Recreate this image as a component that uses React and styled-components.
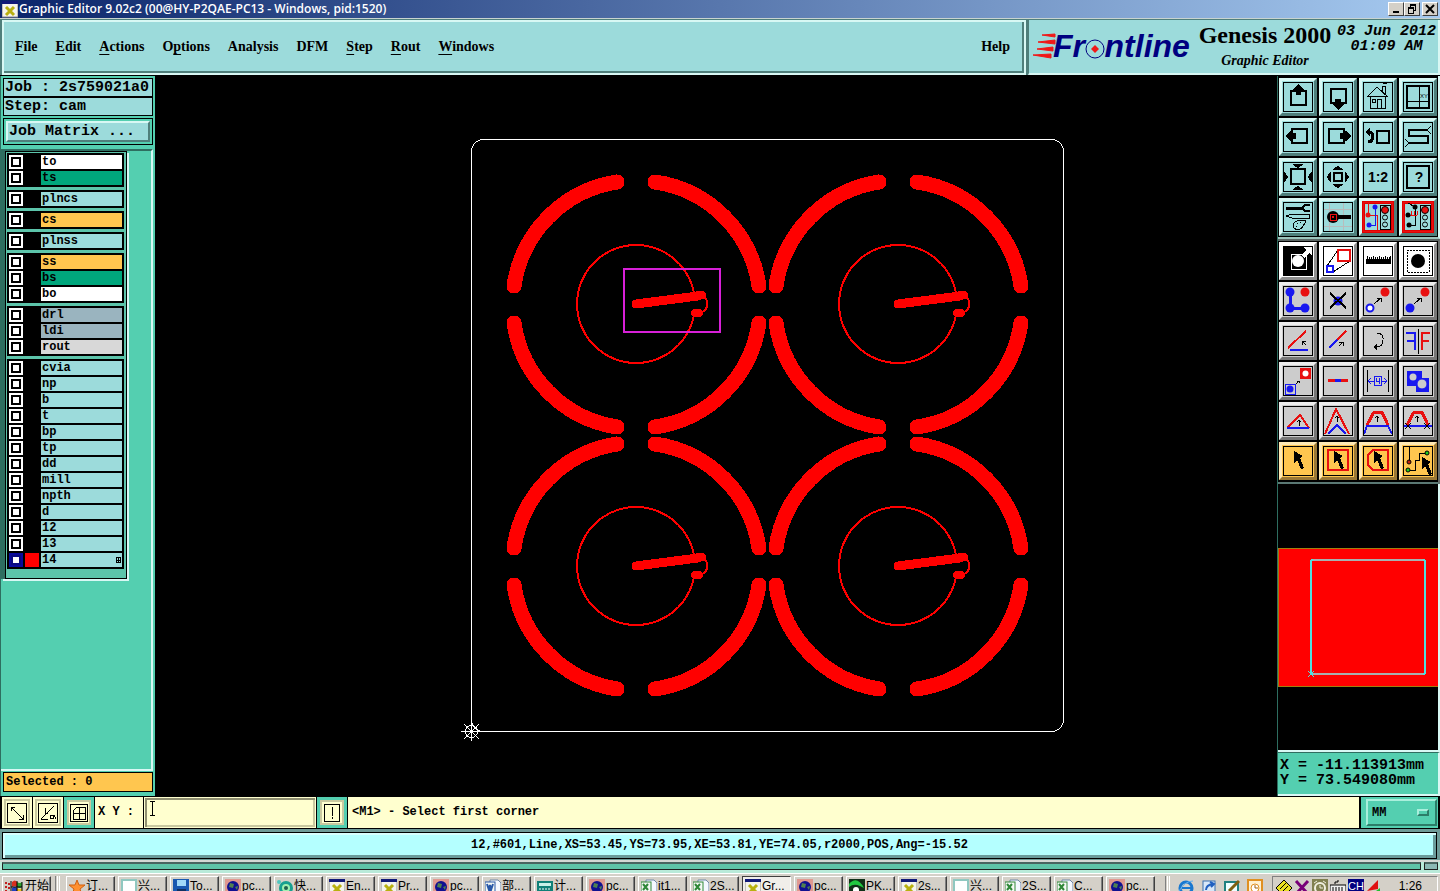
import React from "react";
import styled, { createGlobalStyle, css } from "styled-components";

const GlobalStyle = createGlobalStyle`
  * {
    box-sizing: border-box;
  }
  body {
    margin: 0;
    background: #000000;
    overflow: hidden;
  }
  button, input, select {
    font: inherit;
    color: inherit;
    margin: 0;
    padding: 0;
    border: 0;
    border-radius: 0;
    background: none;
  }
  svg {
    display: block;
    flex: none;
  }
`;

const mono = `"Liberation Mono", "Courier New", monospace`;
const serif = `"Liberation Serif", "Times New Roman", serif`;
const ui = `"Liberation Sans", "Noto Sans CJK SC", sans-serif`;

const aqua = "#9cdbdb";
const teal = "#54cfb0";
const dark = "#4f7f7b";
const light = "#d8f8f4";
const cream = "#ffffcf";

const Page = styled.div`
  display: flex;
  flex-direction: column;
  height: 100vh;
  overflow: hidden;
`;

/* title bar */

const TitleBar = styled.div`
  flex: none;
  display: flex;
  align-items: center;
  gap: 1px;
  height: 18px;
  padding: 0 2px;
  background: linear-gradient(90deg, #0a246a, #a6caf0);
  color: #ffffff;
  font: 600 12px "Open Sans", "Noto Sans", sans-serif;
`;

const TitleText = styled.span`
  flex: 1;
  line-height: 16px;
  white-space: nowrap;
`;

const WindowButtons = styled.div`
  display: flex;
  button + button + button {
    margin-left: 2px;
  }
`;

const WindowButton = styled.button`
  width: 16px;
  height: 14px;
  display: flex;
  align-items: center;
  justify-content: center;
  background: #d4d0c8;
  border: 1px solid;
  border-color: #ffffff #404040 #404040 #ffffff;
`;

/* header */

const Header = styled.header`
  flex: none;
  display: flex;
  gap: 2px;
  height: 58px;
  padding-left: 2px;
  background: ${dark};
  border-top: 1px solid #c8d4d0;
  border-bottom: 1px solid #000000;
`;

const MenuBar = styled.nav`
  flex: 1;
  display: flex;
  align-items: center;
  gap: 18px;
  margin-top: 1px;
  padding: 0 14px 2px 11px;
  background: ${aqua};
  border: 2px solid ${light};
  box-shadow: inset -2px -2px ${dark};
  font: bold 14px ${serif};
  color: #000000;
`;

const MenuItem = styled.button`
  line-height: 18px;
  margin-left: ${props => (props.$end ? "auto" : 0)};
  u {
    text-underline-offset: 3px;
  }
`;

const Brand = styled.div`
  flex: 0 0 412px;
  display: flex;
  justify-content: space-between;
  margin-top: 1px;
  padding: 0 2px 0 4px;
  background: ${aqua};
  border-left: 1px solid ${dark};
  border-right: 2px solid ${light};
  border-bottom: 2px solid ${light};
`;

const Product = styled.div`
  text-align: center;
  font: bold 24px/30px ${serif};
  em {
    display: block;
    font-size: 14px;
    line-height: 22px;
  }
`;

const Clock = styled.div`
  padding-top: 4px;
  text-align: center;
  font: italic bold 15px/15px ${mono};
  white-space: pre-line;
`;

/* main area */

const Main = styled.main`
  flex: 1;
  display: flex;
  min-height: 0;
  background: #000000;
`;

const Sidebar = styled.aside`
  flex: 0 0 155px;
  display: flex;
  flex-direction: column;
  padding: 1px 2px 4px 2px;
  background: ${teal};
  border-left: 1px solid #2e6e60;
  font: bold 15px ${mono};
`;

const JobLine = styled.div`
  height: 19px;
  margin-top: ${props => (props.$first ? "1px" : 0)};
  padding-left: 1px;
  background: ${aqua};
  border: 1px solid #000000;
  line-height: 17px;
  white-space: nowrap;
`;

const MatrixFrame = styled.div`
  margin: 2px 0 3px;
  padding: 2px;
  border: 1px solid #000000;
`;

const MatrixButton = styled.button`
  display: block;
  width: 100%;
  height: 21px;
  padding-left: 1px;
  background: ${aqua};
  border: 2px solid;
  border-color: ${light} ${dark} ${dark} ${light};
  text-align: left;
  line-height: 17px;
`;

const LayerArea = styled.div`
  flex: 1;
  margin: 1px 0 1px -2px;
  border-top: 2px solid #2e6e60;
  border-right: 2px solid ${light};
  border-bottom: 2px solid ${light};
`;

const LayerPanel = styled.div`
  display: flex;
  flex-direction: column;
  gap: 3px;
  width: 122px;
  padding: 1px 2px 9px 1px;
  background: #5cc4aa;
  border: 1px solid #000000;
`;

const LayerWrap = styled.div`
  display: inline-block;
  padding-left: 4px;
  background: #2e6e60;
  box-shadow: 2px 2px ${light};
`;

const LayerGroup = styled.div`
  display: flex;
  flex-direction: column;
  gap: 2px;
  padding: 2px;
  background: #000000;
`;

const LayerRow = styled.label`
  display: grid;
  grid-template-columns: 14px 14px 1fr;
  column-gap: 2px;
  height: 14px;
`;

const LayerCheck = styled.input`
  appearance: none;
  width: 14px;
  height: 14px;
  background: #ffffff;
  border: 2px solid ${props => (props.$active ? "#0a0a9c" : "#ffffff")};
  box-shadow: inset 0 0 0 2px ${props => (props.$active ? "#0a0a80" : "#000000")};
`;

const Swatch = styled.span`
  background: ${props => (props.$on ? "#ff0000" : "#000000")};
`;

const LayerName = styled.span`
  display: flex;
  justify-content: space-between;
  align-items: center;
  padding: 0 1px;
  background: ${props => props.$color};
  font-size: 12px;
  line-height: 14px;
`;

const Selected = styled.div`
  height: 20px;
  padding-left: 2px;
  background: #ffc64f;
  border: 1px solid #000000;
  font-size: 12px;
  line-height: 18px;
`;

const Canvas = styled.div`
  flex: 1;
  min-width: 0;
  svg {
    width: 100%;
    height: 100%;
  }
`;

/* right column */

const Tools = styled.aside`
  flex: 0 0 163px;
  display: flex;
  flex-direction: column;
  border-left: 1px solid #2e6e60;
`;

const ToolGroup = styled.div`
  display: grid;
  grid-template-columns: repeat(4, 38px);
  gap: 2px;
  padding: ${props => (props.$grey ? "1px 1px 2px" : "2px 1px 1px")};
  background: #000000;
  border-right: 2px solid ${props => (props.$grey ? "#6a6f6d" : light)};
  border-top: ${props => (props.$grey ? "2px solid #5a6462" : 0)};
  border-bottom: 2px solid ${props => (props.$grey ? "#5a7874" : "#9cc4bc")};
`;

const toolTones = {
  aqua: css`
    background: ${aqua};
    border-color: ${light} ${dark} ${dark} ${light};
  `,
  white: css`
    background: #ffffff;
    border-color: #ffffff #8f8f8f #8f8f8f #ffffff;
  `,
  grey: css`
    background: #cccccc;
    border-color: #ededed #777777 #777777 #ededed;
  `,
  orange: css`
    background: #ffc64f;
    border-color: #ffe9b4 #9a7836 #9a7836 #ffe9b4;
  `
};

const ToolButton = styled.button`
  width: 38px;
  height: 38px;
  display: flex;
  align-items: center;
  justify-content: center;
  border: 3px solid;
  ${props => toolTones[props.$tone]}
  box-shadow: ${props => (props.$alert ? "inset 0 0 0 3px #e00000" : "none")};
  circle, text {
    shape-rendering: geometricPrecision;
  }
`;

const Preview = styled.div`
  flex: 1;
  display: flex;
  align-items: center;
  background: #000000;
  border-right: 2px solid ${light};
  border-bottom: 2px solid ${light};
  svg {
    width: 100%;
  }
`;

const Coordinates = styled.div`
  height: 44px;
  padding: 5px 2px;
  background: ${teal};
  border-top: 1px solid #2e6e60;
  border-right: 2px solid ${light};
  border-bottom: 2px solid ${light};
  font: bold 15px/15px ${mono};
  white-space: pre;
`;

/* bottom rows */

const PromptRow = styled.div`
  flex: none;
  display: flex;
  gap: 1px;
  height: 33px;
  padding: 1px 2px;
  background: #000000;
  font: bold 12px ${mono};
`;

const PromptButton = styled.button`
  flex: 0 0 30px;
  display: flex;
  align-items: center;
  justify-content: center;
  background: ${cream};
  border: ${props => (props.$raised ? `3px solid ${teal}` : "2px solid #ffffcf")};
  box-shadow: inset 0 0 0 2px #c9c9a0;
`;

const XYLabel = styled.label`
  flex: 0 0 48px;
  padding-left: 3px;
  background: ${cream};
  line-height: 31px;
  white-space: nowrap;
`;

const XYField = styled.div`
  flex: 0 0 172px;
  position: relative;
  display: flex;
`;

const XYInput = styled.input`
  flex: 1;
  min-width: 0;
  padding: 0 4px;
  background: ${cream};
  border: 1px solid ${cream};
  box-shadow: inset 2px 2px #8f8f70, inset -2px -2px #c9c9a0;
`;

const Pointer = styled.svg`
  position: absolute;
  left: 6px;
  top: 4px;
`;

const Message = styled.div`
  flex: 1;
  margin-right: 1px;
  padding-left: 4px;
  background: ${cream};
  line-height: 31px;
`;

const UnitBox = styled.div`
  flex: 0 0 77px;
  padding: 2px 1px 2px 5px;
  background: ${teal};
`;

const UnitField = styled.div`
  display: flex;
  align-items: center;
  height: 27px;
  padding: 0 6px 0 4px;
  border: 2px solid;
  border-color: #a9efdc #2c7d69 #2c7d69 #a9efdc;
`;

const UnitSelect = styled.select`
  flex: 1;
  min-width: 0;
  appearance: none;
`;

const UnitMark = styled.span`
  width: 12px;
  height: 7px;
  border: 2px solid;
  border-color: #a9efdc #2c7d69 #2c7d69 #a9efdc;
`;

const StatusRow = styled.div`
  flex: none;
  padding: 3px 3px 1px 2px;
  background: #6f9b98;
`;

const Status = styled.output`
  display: block;
  height: 27px;
  background: #b4ffff;
  border: 1px solid #000000;
  box-shadow: inset 2px 2px #d8ffff, inset -3px -3px #6a9c9c;
  font: bold 12px/25px ${mono};
  text-align: center;
`;

const Strip = styled.div`
  flex: none;
  display: flex;
  gap: 3px;
  height: 13px;
  padding: 0 2px 3px;
  background: #b9ead9;
  border-top: 2px solid #d4d8d4;
`;

const StripBar = styled.div`
  flex: ${props => (props.$small ? "0 0 14px" : 1)};
  background: ${props => (props.$small ? "#8cb8b4" : "#5fc4a8")};
  border: 1px solid #202020;
  border-top: 2px solid #4a6460;
`;

/* taskbar */

const Taskbar = styled.footer`
  flex: none;
  display: flex;
  height: 18px;
  overflow: hidden;
  padding: 2px 2px 0;
  background: #d4d0c8;
  border-top: 1px solid #ffffff;
  font: 12px ${ui};
`;

const TaskButton = styled.button`
  flex: 0 1 49px;
  min-width: 0;
  height: 22px;
  display: flex;
  align-items: flex-start;
  gap: 1px;
  padding: 2px 0 0 2px;
  overflow: hidden;
  white-space: nowrap;
  line-height: 14px;
  background: ${props => (props.$active ? "#f0eeea" : "#d4d0c8")};
  border: 1px solid;
  border-color: ${props =>
    props.$active ? "#404040 #ffffff #ffffff #404040" : "#ffffff #404040 #404040 #ffffff"};
  box-shadow: ${props => (props.$active ? "none" : "inset -1px -1px #808080")};
`;

const TaskList = styled.div`
  flex: 1;
  display: flex;
  gap: 3px;
  min-width: 0;
`;

const Grip = styled.span`
  flex: none;
  width: 5px;
  height: 22px;
  margin: 0 ${props => props.$right}px 0 ${props => props.$left}px;
  border-left: 1px solid #808080;
  border-right: 3px double #ffffff;
`;

const QuickLaunch = styled.div`
  display: flex;
  gap: 7px;
  height: 22px;
  padding-top: 3px;
`;

const Tray = styled.div`
  flex: 0 0 166px;
  display: flex;
  gap: 2px;
  height: 22px;
  margin-left: 9px;
  padding: 2px 15px 0 3px;
  border: 1px solid;
  border-color: #808080 #ffffff #ffffff #808080;
  line-height: 14px;
  time {
    margin-left: auto;
  }
`;

const layerGroups = [
  [["to", "#ffffff"], ["ts", "#00a67c"]],
  [["plncs", aqua]],
  [["cs", "#ffc64f"]],
  [["plnss", aqua]],
  [["ss", "#ffc64f"], ["bs", "#00a67c"], ["bo", "#ffffff"]],
  [["drl", "#9ab4bf"], ["ldi", "#9ab4bf"], ["rout", "#d8d8d8"]],
  ["cvia", "np", "b", "t", "bp", "tp", "dd", "mill", "npth", "d", "12", "13", "14"].map(name => [name, aqua])
];

const menus = [
  ["", "F", "ile"],
  ["", "E", "dit"],
  ["", "A", "ctions"],
  ["O", "p", "tions"],
  ["Analysis", "", ""],
  ["DFM", "", ""],
  ["", "S", "tep"],
  ["", "R", "out"],
  ["", "W", "indows"]
];

const K = "#000000";
const R = "#e81010";
const B = "#1818f0";

const TrafficLight = () => (
  <>
    <rect x="17" y="3" width="10" height="24" fill={aqua} stroke={K} />
    <circle cx="22" cy="8" r="3.5" fill={R} stroke={K} />
    <circle cx="22" cy="15.5" r="2.5" fill="none" stroke={K} />
    <circle cx="22" cy="22.5" r="2.5" fill="none" stroke={K} />
  </>
);

const Cursor = ({ x = 0, y = 0 }) => (
  <path d={`M${11 + x} ${5 + y}l9 5-3 2 4 10-3 1-4-9-3 3z`} fill={K} />
);

const UpArrow = ({ x, y }) => (
  <path d={`M${x} ${y + 6}V${y}M${x - 2} ${y + 2}l2-2 2 2`} fill="none" stroke={K} />
);

const viewTools = [
  ["Pan up", <><rect x="8" y="9" width="15" height="14" fill="none" stroke={K} strokeWidth="2" /><path d="M15 2l6 6v2h-3v3h-5v-3H9V8z" /></>],
  ["Pan down", <><rect x="8" y="7" width="15" height="14" fill="none" stroke={K} strokeWidth="2" /><path d="M15 28l-6-6v-2h3v-3h6v3h3v2z" /></>],
  ["Home", <><path d="M7 14v12h15V14M4 15L14 5l11 10M5 14h19M19 9V4h3v8M14 26v-9h4v9M9 17h3v3H9zM20 2l4-1" fill="none" stroke={K} /></>],
  ["XY zoom", <><rect x="4" y="4" width="22" height="22" fill="none" stroke={K} strokeWidth="2" /><path d="M16 4v22M4 19h22" stroke={K} /><text x="17" y="16" fontSize="6" fontFamily="Liberation Sans, sans-serif">XY</text></>],
  ["Pan left", <><rect x="9" y="7" width="15" height="14" fill="none" stroke={K} strokeWidth="2" /><path d="M2 14l5-5h2v2h4v6H9v2H7z" /></>],
  ["Pan right", <><rect x="6" y="7" width="15" height="14" fill="none" stroke={K} strokeWidth="2" /><path d="M28 14l-5-5h-2v2h-4v6h4v2h2z" /></>],
  ["Previous zoom", <><rect x="14" y="9" width="12" height="12" fill="none" stroke={K} strokeWidth="2" /><path d="M5 10h2c4 1 4 10-2 10" fill="none" stroke={K} strokeWidth="3" /><path d="M7 5v10L2 10z" /></>],
  ["Serpentine", <><path d="M24 8H6v6h19v7H5" fill="none" stroke={K} strokeWidth="2" /><path d="M28 4l-4 4 4 4M2 17l4 4-4 4" fill="none" stroke={K} /></>],
  ["Zoom in", <><rect x="8" y="7" width="14" height="15" fill="none" stroke={K} strokeWidth="2" /><path d="M10 2h10v1l-5 3-5-3zM10 28h10v-1l-5-3-5 3zM1 10v10h1l3-5-3-5zM29 10v10h-1l-3-5 3-5z" /></>],
  ["Zoom out", <><rect x="11" y="11" width="8" height="8" fill="none" stroke={K} strokeWidth="2" /><path d="M10 8h10v-1l-5-3-5 3zM10 22h10v1l-5 3-5-3zM8 10v10h-1l-3-5 3-5zM22 10v10h1l3-5-3-5z" /></>],
  ["Scale", <text x="15" y="20" textAnchor="middle" fontSize="14" fontWeight="bold" fontFamily="Liberation Sans, sans-serif">1:2</text>],
  ["Query", <><rect x="4" y="4" width="22" height="22" fill="none" stroke={K} strokeWidth="2" /><text x="16" y="20" textAnchor="middle" fontSize="14" fontWeight="bold" fontFamily="Liberation Sans, sans-serif">?</text></>],
  ["Settings", <><path d="M3 6h16" stroke={K} strokeWidth="3" /><path d="M27 3h-5l-3 3 3 3h5" fill="none" stroke={K} strokeWidth="2" /><path d="M3 14l6-2h17v4H9zM11 26c-4-7 6-9 12-7 0 3-2 2-3 5s-6 5-9 2z" fill="none" stroke={K} /><path d="M14 21h1M17 20h1M13 24h1" stroke={K} /></>],
  ["Snap", <><path d="M6 1v28M20 1v28M1 7h28M1 24h28" stroke="#b8bcbc" /><circle cx="10" cy="15" r="6" /><path d="M15 15h13" stroke={K} strokeWidth="4" /><rect x="7" y="12" width="6" height="6" fill="none" stroke={R} /><rect x="9" y="14" width="2" height="2" fill={R} /></>],
  ["Net display", <><path d="M5 1v12h9v15" fill="none" stroke={R} /><path d="M12 4v19H6" fill="none" stroke={B} /><circle cx="5" cy="13" r="2.5" fill={R} /><circle cx="12" cy="5" r="2.5" fill={B} /><circle cx="6" cy="23" r="2.5" fill={B} /><TrafficLight /></>, true],
  ["Net check", <><path d="M5 1l7 4v18H6" fill="none" stroke={K} /><path d="M5 13h9M8 9v4M11 9v4M14 9v4" fill="none" stroke={R} /><circle cx="5" cy="13" r="2.5" /><circle cx="12" cy="5" r="2.5" /><circle cx="6" cy="23" r="2.5" /><TrafficLight /></>, true]
];

const trapezoid = "M4 19l7-13h8l6 13";

const editTools = [
  ["white", "Negative", <><rect width="30" height="30" /><path d="M8 8h15v15H8z" fill="none" stroke="#fff" /><circle cx="15" cy="15" r="6" fill="#fff" /><path d="M18 9l5-5-2-3h8v8l-3-2-5 5z" fill="#fff" /></>],
  ["white", "Resize", <><path d="M4 20L15 4M10 26l17-11" stroke={K} /><path d="M15 4h12v11H15z" fill="none" stroke={R} strokeWidth="2" /><path d="M4 20h6v6H4z" fill="none" stroke={B} strokeWidth="2" /></>],
  ["white", "Measure", <><rect x="3" y="13" width="25" height="5" /><path d="M4 10v4M6 11v3M8 11v3M10 10v4M12 11v3M14 11v3M16 10v4M18 11v3M20 11v3M22 10v4M24 11v3M26 11v3M27 10v4" stroke={K} /></>],
  ["white", "Select features", <><path d="M4 4h22v22H4z" fill="none" stroke={K} strokeDasharray="2 1" /><circle cx="15" cy="15" r="7" /></>],
  ["grey", "Reconnect", <><path d="M7 6v16h15" fill="none" stroke={B} strokeWidth="3" /><circle cx="7" cy="6" r="4.5" fill={B} /><circle cx="7" cy="22" r="4.5" fill={B} /><circle cx="22" cy="22" r="4.5" fill={B} /><circle cx="22" cy="6" r="4.5" fill={R} /></>],
  ["grey", "Delete", <><circle cx="15" cy="15" r="4.5" fill={B} /><path d="M7 7l16 15M23 7L7 22" stroke={K} strokeWidth="2" /></>],
  ["grey", "Copy", <><circle cx="22" cy="6" r="4.5" fill={R} /><circle cx="7" cy="22" r="3.5" fill="#fff" stroke={B} strokeWidth="2" /><path d="M11 18l7-6M14 12h4v4" fill="none" stroke={K} /></>],
  ["grey", "Move", <><circle cx="22" cy="6" r="4.5" fill={R} /><circle cx="7" cy="22" r="4.5" fill={B} /><path d="M11 18l7-6M14 12h4v4" fill="none" stroke={K} /></>],
  ["grey", "Rotate line", <><path d="M5 22L23 5" stroke={R} strokeWidth="2" /><path d="M7 24h18" stroke={B} strokeWidth="2" /><path d="M23 19l-4-4M19 19v-4h4" fill="none" stroke={K} /></>],
  ["grey", "Extend line", <><path d="M23 5l-9 9" stroke={R} strokeWidth="2" /><path d="M14 14l-8 8" stroke={B} strokeWidth="2" /><path d="M16 20l4-4M16 16h4v4" fill="none" stroke={K} /></>],
  ["grey", "Rotate", <><path d="M14 7c4 0 7 3 6 8s-3 6-7 6" fill="none" stroke={K} strokeWidth="1" /><path d="M10 21l4-4v8z" /></>],
  ["grey", "Mirror", <><path d="M3 7h9v17M4 15h8" fill="none" stroke={B} strokeWidth="2" /><path d="M15 3v25" stroke={K} /><path d="M27 7h-8v17M26 15h-7" fill="none" stroke={R} strokeWidth="2" /></>],
  ["grey", "Substitute", <><path d="M17 2h11v11H17z" fill={R} /><circle cx="22.5" cy="7.5" r="3" fill="#fff" /><path d="M2 18h10v10H2z" fill="none" stroke={B} /><circle cx="7" cy="23" r="3.5" fill={B} /><path d="M13 18l3-3M14 15h2v2" fill="none" stroke={K} /></>],
  ["grey", "Break", <><path d="M5 14h20" stroke={R} strokeWidth="3" /><path d="M12 14h6" stroke={B} strokeWidth="3" /></>],
  ["grey", "Spacing", <><path d="M4 4v22M25 4v22" stroke={K} /><path d="M5 15h6M18 15h6M8 12l-3 3 3 3M21 12l3 3-3 3M11 10h7v9h-7zM13 12v3h3v-3M16 15v3" fill="none" stroke={B} /></>],
  ["grey", "Merge", <><path d="M4 5h15v7h7v14H13v-6H4z" fill={B} /><circle cx="10" cy="11" r="3.5" fill="#cccccc" /><circle cx="19" cy="18" r="5" fill="#cccccc" stroke={B} /></>],
  ["grey", "Stretch triangle", <><path d="M4 22L17 9l9 13" fill="none" stroke={R} strokeWidth="2" /><path d="M4 22h22" stroke={B} strokeWidth="2" /><UpArrow x={16} y={14} /></>],
  ["grey", "Stretch corner", <><path d="M2 28L13 3l13 25" fill="none" stroke={R} strokeWidth="2" /><path d="M5 28l9-9 9 9" fill="none" stroke={B} strokeWidth="2" /><UpArrow x={14} y={10} /></>],
  ["grey", "Stretch parallel", <><path d={trapezoid} fill="none" stroke={R} strokeWidth="3" /><path d="M1 28l3-8h21l4 8" fill="none" stroke={B} strokeWidth="2" /><UpArrow x={14} y={10} /></>],
  ["grey", "Stretch ends", <><path d={trapezoid} fill="none" stroke={R} strokeWidth="3" /><path d="M0 20h30" stroke={B} strokeWidth="2" /><path d="M2 17l6 6M8 17l-6 6M21 17l6 6M27 17l-6 6" stroke={K} /><UpArrow x={14} y={10} /></>],
  ["orange", "Select single", <Cursor />],
  ["orange", "Select frame", <><path d="M5 4h20v20H5z" fill="none" stroke={R} strokeWidth="2" /><Cursor /></>],
  ["orange", "Select polygon", <><path d="M10 4h15v20H10l-5-5V9z" fill="none" stroke={R} strokeWidth="2" /><Cursor /></>],
  ["orange", "Select net", <><path d="M6 1v15M5 24h7V14h4V7h8" fill="none" stroke={K} /><circle cx="6" cy="16" r="2" fill="#c02010" stroke={K} /><circle cx="5" cy="24" r="2" fill="#20d020" stroke={K} /><circle cx="24" cy="7" r="2" fill="#20d020" stroke={K} /><Cursor x={8} y={6} /></>]
];

const Tool = ({ tone, label, alert, children }) => (
  <ToolButton $tone={tone} $alert={alert} aria-label={label}>
    <svg width="30" height="30" viewBox="0 0 30 30" shapeRendering="crispEdges">
      {children}
      <rect x="0.5" y="0.5" width="29" height="29" fill="none" stroke={alert ? R : K} />
    </svg>
  </ToolButton>
);

const arcs = [
  "M-122 -18A123 123 0 0 1 -19 -122",
  "M19 -122A123 123 0 0 1 123 -18",
  "M123 19A123 123 0 0 1 19 123",
  "M-19 123A123 123 0 0 1 -122 19"
];

const Pattern = ({ x, y }) => (
  <g transform={`translate(${x} ${y})`} stroke="#ff0000" fill="none" strokeLinecap="round">
    {arcs.map(d => (
      <path key={d} d={d} strokeWidth="15" />
    ))}
    <path d="M58 -11A59 59 0 1 0 58 11" strokeWidth="2" />
    <path d="M67 -8Q72 -5 71 2Q70 7 66 8" strokeWidth="2" />
    <path d="M0 0L62 -8" strokeWidth="9" />
    <ellipse cx="64" cy="-9" rx="6" ry="4" fill="#ff0000" strokeWidth="1" />
    <ellipse cx="61" cy="9" rx="6" ry="4" fill="#ff0000" strokeWidth="1" />
  </g>
);

const Board = () => (
  <Canvas>
    <svg viewBox="155 76 1122 720" shapeRendering="crispEdges">
      <rect x="471.5" y="139.5" width="592" height="592" rx="12" fill="none" stroke="#ffffff" />
      <Pattern x={636} y={304} />
      <Pattern x={898} y={304} />
      <Pattern x={636} y={566} />
      <Pattern x={898} y={566} />
      <rect x="624" y="269" width="96" height="63" fill="none" stroke="#d820d8" strokeWidth="2" />
      <g fill="none" stroke="#ffffff">
        <circle cx="471.5" cy="731.5" r="6" />
        <path d="M461 731.5h20M471.5 721v20M464 724l15 15M479 724l-15 15" />
      </g>
    </svg>
  </Canvas>
);

const XWin = () => (
  <>
    <rect y="1" width="16" height="15" fill="#f4f4ec" stroke="#909090" />
    <rect width="16" height="3" fill="#101878" />
    <path d="M4 6l8 8M12 6l-8 8" stroke="#b8b010" strokeWidth="3" />
  </>
);

const Globe = () => (
  <>
    <rect width="16" height="16" fill="#e09890" />
    <circle cx="8" cy="8" r="6" fill="#101090" />
    <path d="M5 4l4 1-1 4-4-1zM10 8l3-1-1 4z" fill="#508050" />
  </>
);

const Office = ({ color, mark }) => (
  <>
    <path d="M5 1h8l3 3v12H5z" fill="#f4f8ff" stroke="#7088a8" />
    <rect y="3" width="10" height="10" fill="#f4f8f4" stroke={color} />
    <path d={mark} fill="none" stroke={color} strokeWidth="2" />
  </>
);

const icons = {
  flag: <><path d="M7 3q3-3 5 0v5q-2-2-5 0z" fill="#d83020" /><path d="M12 3q3 2 5 0v5q-3 2-5 0z" fill="#30a030" /><path d="M7 9q3-2 5 0v6q-2-2-5 0z" fill="#2040c0" /><path d="M12 9q3 2 5 0v6q-3 2-5 0z" fill="#e8c020" /><path d="M6 2v14M12 2v13M17 3v12M6 8h11" stroke={K} /><path d="M0 4h2M3 5h2M0 8h2M3 9h2M0 12h2M3 13h2" stroke="#c02020" strokeWidth="2" /></>,
  star: <path d="M8 1l2 5h6l-5 4 2 6-5-3-5 3 2-6-5-4h6z" fill="#ff9030" stroke="#d06010" />,
  note: <><path d="M1 1h14v12l-3 3H1z" fill="#ffffff" stroke="#90c8c0" strokeWidth="2" /><path d="M11 16v-4h4z" fill="#406060" /></>,
  floppy: <><rect width="16" height="16" fill="#1858b0" /><rect x="4" y="1" width="9" height="6" fill="#a0d8f8" /><rect x="4" y="10" width="9" height="6" fill="#103060" /></>,
  globe: <Globe />,
  snail: <><circle cx="9" cy="9" r="7" fill="#18a090" /><circle cx="9" cy="9" r="4" fill="#a0f0b0" /><circle cx="9" cy="9" r="2" fill="#206050" /><circle cx="2" cy="3" r="2" fill="#50c8c0" /></>,
  xwin: <XWin />,
  word: <Office color="#2858a8" mark="M2 5l2 6 1-5 1 5 2-6" />,
  calc: <><rect y="2" width="16" height="13" fill="#108078" /><rect x="2" y="4" width="12" height="3" fill="#c8f0e8" /><path d="M2 10h12M2 13h12" stroke="#ffffff" strokeDasharray="2 1" /></>,
  excel: <Office color="#308838" mark="M2 5l5 6M7 5l-5 6" />,
  pk: <><rect width="16" height="16" fill="#103018" /><path d="M0 5q8-9 15 4l-4-2q-6-3-11 1z" fill="#20c840" /><circle cx="7" cy="11" r="3" fill="#ffffff" /></>,
  ie: <><circle cx="8" cy="9" r="6" fill="none" stroke="#1878d0" strokeWidth="3" /><path d="M4 9h9" stroke="#1878d0" strokeWidth="2" /><path d="M1 12Q7 2 15 2" fill="none" stroke="#60b0f0" /></>,
  sync: <><rect x="2" y="2" width="12" height="14" fill="#d8e8f8" stroke="#3870b0" /><path d="M5 11q0-5 7-6M9 3l4 2-3 3" fill="none" stroke="#2060c0" strokeWidth="2" /></>,
  edit: <><rect x="1" y="3" width="13" height="13" fill="#f0ffff" stroke="#208080" strokeWidth="2" /><path d="M5 12L15 2" stroke="#806010" strokeWidth="3" /></>,
  outlook: <><rect x="1" y="1" width="14" height="15" fill="#fff0d0" stroke="#e09020" strokeWidth="2" /><circle cx="8" cy="9" r="4" fill="#fff" stroke="#e09020" /><path d="M8 6v3h3" fill="none" stroke="#a06010" /></>,
  diamond: <><path d="M8 1l8 8-8 8-8-8z" fill="#e8e020" stroke={K} /><path d="M4 10l6-6M7 12l5-5" stroke={K} /></>,
  cross: <path d="M2 2l12 13M14 2L2 15" stroke="#780078" strokeWidth="3" />,
  alarm: <><rect width="16" height="16" fill="#808050" /><circle cx="8" cy="9" r="5" fill="none" stroke="#f0f0e0" strokeWidth="2" /><path d="M8 6v3h3M2 4l3-2M14 4l-3-2" fill="none" stroke="#f0f0e0" /></>,
  keyboard: <><rect x="0" y="6" width="16" height="9" fill="#f0f0f0" stroke={K} /><path d="M2 9h12M2 11h12M2 13h12" stroke={K} strokeDasharray="2 1" /><path d="M5 5V3h3V1" fill="none" stroke={K} /></>,
  lang: <><rect width="16" height="17" fill="#000080" /><text x="8" y="11" textAnchor="middle" fontSize="11" fontFamily="Liberation Sans, sans-serif" fill="#ffffff">CH</text></>,
  ati: <><path d="M1 12L12 1v9z" fill="#e01010" /><path d="M10 12l4-3v8z" fill="#20c030" /></>
};

const Icon = ({ name, width = 16 }) => (
  <svg width={width} height="17" viewBox={`0 0 ${width} 17`}>{icons[name]}</svg>
);

const tasks = [
  ["star", "订..."],
  ["note", "兴..."],
  ["floppy", "To..."],
  ["globe", "pc..."],
  ["snail", "快..."],
  ["xwin", "En..."],
  ["xwin", "Pr..."],
  ["globe", "pc..."],
  ["word", "部..."],
  ["calc", "计..."],
  ["globe", "pc..."],
  ["excel", "it1..."],
  ["excel", "2S..."],
  ["xwin", "Gr...", true],
  ["globe", "pc..."],
  ["pk", "PK..."],
  ["xwin", "2s..."],
  ["note", "兴..."],
  ["excel", "2S..."],
  ["excel", "C..."],
  ["globe", "pc..."]
];

const Logo = () => (
  <svg width="160" height="52" viewBox="0 0 160 52">
    <path d="M22 14v3l-13-2zM22 20v4l-17-2zM20 27v4l-16-2zM18 34v4l-18-3z" fill="#f01818" stroke="#f01818" />
    <text x="20" y="37" fontFamily="Liberation Sans, Arial, sans-serif" fontSize="32" fontWeight="bold" fontStyle="italic" fill="#000080">
      Fr<tspan fill="none">o</tspan>ntline
    </text>
    <circle cx="62" cy="29" r="9" fill="none" stroke="#000080" />
    <path d="M62 25l4 4-4 4-4-4z" fill="#f01818" />
  </svg>
);

const App = () => (
  <>
    <GlobalStyle />
    <Page>
      <TitleBar>
        <Icon name="xwin" />
        <TitleText>Graphic Editor 9.02c2 (00@HY-P2QAE-PC13 - Windows, pid:1520)</TitleText>
        <WindowButtons>
          <WindowButton aria-label="Minimize">
            <svg width="10" height="10"><path d="M2 8h6" stroke={K} strokeWidth="2" /></svg>
          </WindowButton>
          <WindowButton aria-label="Restore">
            <svg width="10" height="10" shapeRendering="crispEdges">
              <path d="M3 1h6M1 4h6" stroke={K} strokeWidth="2" />
              <path d="M3.5 1v2M8.5 1v5.5H7M1.5 4v5.5h5V4" fill="none" stroke={K} />
            </svg>
          </WindowButton>
          <WindowButton aria-label="Close">
            <svg width="10" height="10"><path d="M1 1l8 8M9 1L1 9" stroke={K} strokeWidth="2" /></svg>
          </WindowButton>
        </WindowButtons>
      </TitleBar>

      <Header>
        <MenuBar>
          {menus.map(([before, key, after]) => (
            <MenuItem key={before + key + after}>
              {before}
              {key && <u>{key}</u>}
              {after}
            </MenuItem>
          ))}
          <MenuItem $end>Help</MenuItem>
        </MenuBar>
        <Brand>
          <Logo />
          <Product>
            Genesis 2000
            <em>Graphic Editor</em>
          </Product>
          <Clock>{"03 Jun 2012\n01:09 AM"}</Clock>
        </Brand>
      </Header>

      <Main>
        <Sidebar>
          <JobLine $first>Job : 2s759021a0</JobLine>
          <JobLine>Step: cam</JobLine>
          <MatrixFrame>
            <MatrixButton>Job Matrix ...</MatrixButton>
          </MatrixFrame>
          <LayerArea>
            <LayerWrap>
              <LayerPanel>
                {layerGroups.map(group => (
                  <LayerGroup key={group[0][0]}>
                    {group.map(([name, color]) => (
                      <LayerRow key={name}>
                        <LayerCheck type="checkbox" $active={name === "14"} />
                        <Swatch $on={name === "14"} />
                        <LayerName $color={color}>
                          {name}
                          {name === "14" && (
                            <svg width="5" height="6" shapeRendering="crispEdges">
                              <path d="M0.5 0.5h4v5h-4zM2.5 0v6M0 3h5" fill="none" stroke={K} />
                            </svg>
                          )}
                        </LayerName>
                      </LayerRow>
                    ))}
                  </LayerGroup>
                ))}
              </LayerPanel>
            </LayerWrap>
          </LayerArea>
          <Selected>Selected : 0</Selected>
        </Sidebar>

        <Board />

        <Tools>
          <ToolGroup>
            {viewTools.map(([label, drawing, alert]) => (
              <Tool key={label} tone="aqua" label={label} alert={alert}>{drawing}</Tool>
            ))}
          </ToolGroup>
          <ToolGroup $grey>
            {editTools.map(([tone, label, drawing]) => (
              <Tool key={label} tone={tone} label={label}>{drawing}</Tool>
            ))}
          </ToolGroup>
          <Preview>
            <svg viewBox="0 0 160 139" shapeRendering="crispEdges">
              <rect x="0.5" y="0.5" width="160" height="138" fill="#ff0000" stroke="#a08010" />
              <rect x="33" y="12" width="114" height="114" rx="2" fill="none" stroke="#50e0e0" strokeWidth="2" />
              <path d="M35 12h110M35 126h110" stroke="#a8b0b0" strokeWidth="2" />
              <path d="M30 123l6 6M36 123l-6 6" stroke="#50e0e0" />
            </svg>
          </Preview>
          <Coordinates>{"X = -11.113913mm\nY = 73.549080mm"}</Coordinates>
        </Tools>
      </Main>

      <PromptRow>
        <PromptButton aria-label="Absolute mode">
          <svg width="20" height="20" shapeRendering="crispEdges">
            <path d="M0.5 0.5h19v19H0.5zM4 4l12 12M4 8V4h4M12 16h4v-4" fill="none" stroke={K} />
          </svg>
        </PromptButton>
        <PromptButton aria-label="Angle mode">
          <svg width="20" height="20" shapeRendering="crispEdges">
            <path d="M0.5 0.5h19v19H0.5zM3 16L16 3M3 16h7M7 5v5h3M12 12h3v3h-3zM16 12l2 4" fill="none" stroke={K} />
          </svg>
        </PromptButton>
        <PromptButton $raised aria-label="Grid">
          <svg width="18" height="18" shapeRendering="crispEdges">
            <path d="M0.5 0.5h17v17H0.5zM3 7l4-4h8v12H3zM9 3v12M3 9h12" fill="none" stroke={K} />
          </svg>
        </PromptButton>
        <XYLabel htmlFor="xy">X Y :</XYLabel>
        <XYField>
          <XYInput id="xy" type="text" />
          <Pointer width="5" height="15" shapeRendering="crispEdges">
            <path d="M0 0.5h5M0 14.5h5M2.5 0v15" stroke={K} />
          </Pointer>
        </XYField>
        <PromptButton $raised aria-label="Alert">
          <svg width="16" height="18" shapeRendering="crispEdges">
            <path d="M0.5 0.5h15v17H0.5z" fill="none" stroke={K} />
            <path d="M8.5 3v9M8.5 13v2" stroke={K} />
          </svg>
        </PromptButton>
        <Message>&lt;M1&gt; - Select first corner</Message>
        <UnitBox>
          <UnitField>
            <UnitSelect aria-label="Units" defaultValue="MM">
              <option>MM</option>
              <option>Inch</option>
            </UnitSelect>
            <UnitMark />
          </UnitField>
        </UnitBox>
      </PromptRow>

      <StatusRow>
        <Status>12,#601,Line,XS=53.45,YS=73.95,XE=53.81,YE=74.05,r2000,POS,Ang=-15.52</Status>
      </StatusRow>
      <Strip>
        <StripBar />
        <StripBar $small />
      </Strip>

      <Taskbar>
        <TaskButton>
          <Icon name="flag" width={19} />
          开始
        </TaskButton>
        <Grip $left={4} $right={6} />
        <TaskList>
          {tasks.map(([icon, label, active], index) => (
            <TaskButton key={index} $active={active}>
              <Icon name={icon} />
              {label}
            </TaskButton>
          ))}
        </TaskList>
        <Grip $left={0} $right={8} />
        <QuickLaunch>
          <Icon name="ie" />
          <Icon name="sync" />
          <Icon name="edit" />
          <Icon name="outlook" />
        </QuickLaunch>
        <Tray>
          <Icon name="diamond" />
          <Icon name="cross" />
          <Icon name="alarm" />
          <Icon name="keyboard" />
          <Icon name="lang" />
          <Icon name="ati" />
          <time>1:26</time>
        </Tray>
      </Taskbar>
    </Page>
  </>
);

export default App;
